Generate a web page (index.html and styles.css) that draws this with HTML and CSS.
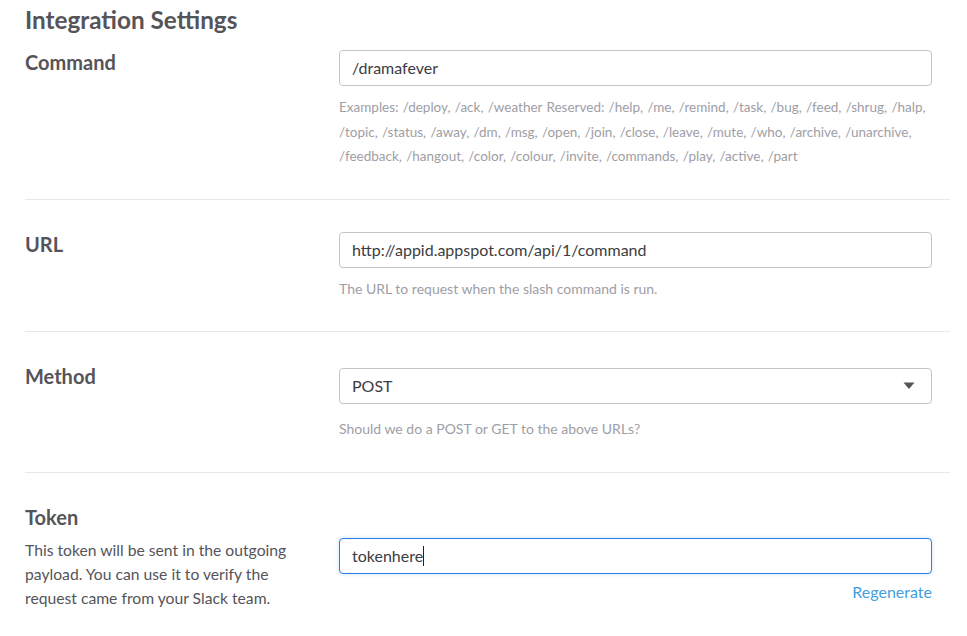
FILE: index.html
```html
<!DOCTYPE html>
<html lang="en">
<head>
<meta charset="utf-8">
<title>Integration Settings</title>
<link rel="stylesheet" href="styles.css">
</head>
<body>
<div class="page">
  <h1 class="title">Integration Settings</h1>

  <section class="row row-first">
    <div class="label-col"><h2 class="label">Command</h2></div>
    <div class="field-col">
      <div class="input">/dramafever</div>
      <p class="help help-long">Examples: /deploy, /ack, /weather Reserved: /help, /me, /remind, /task, /bug, /feed, /shrug, /halp, /topic, /status, /away, /dm, /msg, /open, /join, /close, /leave, /mute, /who, /archive, /unarchive, /feedback, /hangout, /color, /colour, /invite, /commands, /play, /active, /part</p>
    </div>
  </section>

  <section class="row row-url">
    <div class="label-col"><h2 class="label">URL</h2></div>
    <div class="field-col">
      <div class="input">http://appid.appspot.com/api/1/command</div>
      <p class="help">The URL to request when the slash command is run.</p>
    </div>
  </section>

  <section class="row row-method">
    <div class="label-col"><h2 class="label">Method</h2></div>
    <div class="field-col">
      <div class="input select">
        <span>POST</span>
        <svg class="caret-down" width="12" height="8" viewBox="0 0 12 8"><path d="M0.5 0.5 H11.5 L6 7 Z" fill="#555459"/></svg>
      </div>
      <p class="help help-method">Should we do a POST or GET to the above URLs?</p>
    </div>
  </section>

  <section class="row row-token">
    <div class="label-col">
      <h2 class="label">Token</h2>
      <p class="desc">This token will be sent in the outgoing payload. You can use it to verify the request came from your Slack team.</p>
    </div>
    <div class="field-col field-token">
      <div class="input focus">tokenhere<span class="text-caret"></span></div>
      <div class="regen"><a class="link" href="#">Regenerate</a></div>
    </div>
  </section>
</div>
</body>
</html>
```

FILE: styles.css
```css
* { box-sizing: border-box; }

html, body {
  margin: 0;
  padding: 0;
  background: #ffffff;
}

body {
  font-family: Lato, "Open Sans", "Liberation Sans", sans-serif;
  color: #555459;
}

.page {
  padding: 0 17px 0 25px;
}

.title {
  margin: 0;
  font-size: 24.3px;
  font-weight: 700;
  line-height: 40px;
  color: #555459;
}

.row {
  display: flex;
  padding: 32px 0 30px;
  border-top: 1px solid #e8e8e8;
}

.row-first {
  border-top: none;
  padding-top: 10px;
}

.label-col {
  width: 314px;
  flex: none;
}

.field-col {
  flex: 1;
  margin-right: 18px;
  min-width: 0;
}

.label {
  margin: 0;
  font-size: 20px;
  font-weight: 700;
  line-height: 24px;
  color: #555459;
}

.row-method .field-col { margin-top: 4px; }

.input {
  height: 36px;
  border: 1px solid #c5c5c5;
  border-radius: 4px;
  padding: 0 12px;
  font-size: 16px;
  line-height: 34px;
  color: #3d3c40;
  background: #fff;
  white-space: nowrap;
}

.select {
  display: flex;
  align-items: center;
  justify-content: space-between;
  padding-right: 16px;
}

.caret-down { display: block; }

.focus {
  border-color: #2a80e6;
  box-shadow: 0 0 4px rgba(42, 128, 230, 0.25);
}

.text-caret {
  display: inline-block;
  width: 1px;
  height: 20px;
  background: #222;
  vertical-align: -4px;
}

.help {
  margin: 9px 0 0;
  font-size: 14px;
  line-height: 24.5px;
  color: #9e9ea6;
}

.help-long {
  font-size: 13.5px;
  word-spacing: 0.8px;
}

.help-method { margin-top: 13px; }

.desc {
  margin: 9px 0 0;
  font-size: 15.7px;
  line-height: 24px;
  color: #555459;
  width: 275px;
}

.field-token { margin-top: 33px; }

.regen {
  text-align: right;
  margin-top: 7px;
  font-size: 16px;
  line-height: 22px;
}

.link {
  color: #439fe0;
  text-decoration: none;
}
```
